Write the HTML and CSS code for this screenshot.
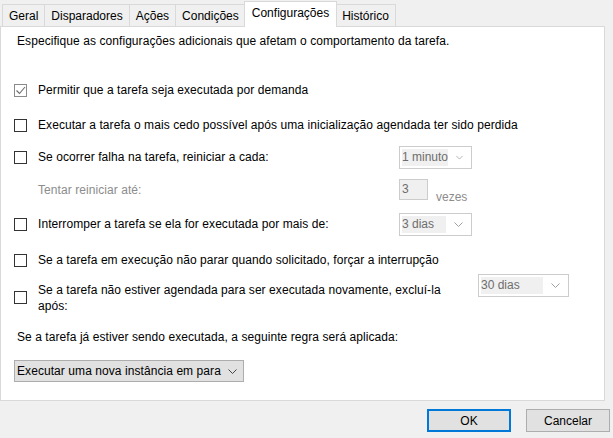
FILE: index.html
```html
<!DOCTYPE html>
<html lang="pt">
<head>
<meta charset="utf-8">
<link rel="stylesheet" href="styles.css">
</head>
<body>
<div class="tabs">
  <div class="tab">Geral</div>
  <div class="tab">Disparadores</div>
  <div class="tab">Ações</div>
  <div class="tab">Condições</div>
  <div class="tab active">Configurações</div>
  <div class="tab">Histórico</div>
</div>
<div class="panel">
  <div class="desc">Especifique as configurações adicionais que afetam o comportamento da tarefa.</div>

  <div class="row r1"><span class="cb checked"><svg width="11" height="11" viewBox="0 0 11 11"><polyline points="1.5,5.5 4.5,8.5 10,2" fill="none" stroke="#6b6b6b" stroke-width="1.1"/></svg></span><span class="lbl">Permitir que a tarefa seja executada por demanda</span></div>

  <div class="row r2"><span class="cb"></span><span class="lbl">Executar a tarefa o mais cedo possível após uma inicialização agendada ter sido perdida</span></div>

  <div class="row r3"><span class="cb"></span><span class="lbl fixed">Se ocorrer falha na tarefa, reiniciar a cada:</span>
    <div class="combo dis"><span class="val">1 minuto</span><svg class="chev" width="9" height="5" viewBox="0 0 9 5"><polyline points="0.5,0.5 4.5,4.5 8.5,0.5" fill="none" stroke="#a0a0a0" stroke-width="1"/></svg></div>
  </div>

  <div class="row r4"><span class="lbl fixed grey indent">Tentar reiniciar até:</span>
    <div class="spin">3</div><span class="grey vezes">vezes</span>
  </div>

  <div class="row r5"><span class="cb"></span><span class="lbl fixed">Interromper a tarefa se ela for executada por mais de:</span>
    <div class="combo dis"><span class="val">3 dias</span><svg class="chev" width="9" height="5" viewBox="0 0 9 5"><polyline points="0.5,0.5 4.5,4.5 8.5,0.5" fill="none" stroke="#a0a0a0" stroke-width="1"/></svg></div>
  </div>

  <div class="row r6"><span class="cb"></span><span class="lbl">Se a tarefa em execução não parar quando solicitado, forçar a interrupção</span></div>

  <div class="row r7"><span class="cb"></span><span class="lbl wrap">Se a tarefa não estiver agendada para ser executada novamente, excluí-la após:</span>
    <div class="combo dis wide"><span class="val">30 dias</span><svg class="chev" width="9" height="5" viewBox="0 0 9 5"><polyline points="0.5,0.5 4.5,4.5 8.5,0.5" fill="none" stroke="#a0a0a0" stroke-width="1"/></svg></div>
  </div>

  <div class="desc rule">Se a tarefa já estiver sendo executada, a seguinte regra será aplicada:</div>

  <div class="combo main"><span class="val">Executar uma nova instância em para</span><svg class="chev" width="9" height="5" viewBox="0 0 9 5"><polyline points="0.5,0.5 4.5,4.5 8.5,0.5" fill="none" stroke="#444" stroke-width="1"/></svg></div>
</div>
<div class="buttons">
  <button class="btn default">OK</button>
  <button class="btn">Cancelar</button>
</div>
</body>
</html>
```

FILE: styles.css
```css
html, body {
  margin: 0;
  padding: 0;
}
body {
  width: 613px;
  height: 438px;
  background: #f0f0f0;
  font-family: "Liberation Sans", Arial, sans-serif;
  font-size: 12px;
  color: #000;
  overflow: hidden;
}
.tabs {
  display: flex;
  align-items: flex-end;
  height: 26px;
  padding-left: 2px;
  position: relative;
  z-index: 1;
}
.tab {
  height: 21px;
  line-height: 22px;
  padding: 0 6px;
  border: 1px solid #d9d9d9;
  border-bottom: none;
  margin-right: -1px;
  background: #f0f0f0;
  white-space: nowrap;
}
.tab.active {
  height: 25px;
  line-height: 23px;
  background: #fff;
  padding: 0 7px;
  margin-left: -1px;
  margin-right: -2px;
  margin-bottom: -1px;
  position: relative;
  z-index: 2;
}
.panel {
  width: 603px;
  height: 373px;
  background: #fff;
  border: 1px solid #d9d9d9;
  box-sizing: content-box;
  position: relative;
}
.desc {
  margin: 7px 0 0 16px;
  line-height: 15px;
  height: 15px;
  letter-spacing: 0.07px;
}
.row {
  display: flex;
  align-items: center;
  height: 24px;
  padding-left: 13px;
}
.cb {
  width: 11px;
  height: 11px;
  border: 1px solid #333;
  background: #fff;
  flex: none;
  margin-right: 11px;
  display: flex;
}
.cb.checked {
  border-color: #8a8a8a;
}
.lbl {
  white-space: nowrap;
  line-height: 15px;
  letter-spacing: 0.07px;
}
.lbl.fixed {
  width: 361px;
  flex: none;
}
.lbl.indent {
  padding-left: 24px;
  width: 361px;
}
.grey {
  color: #8c8c8c;
}
.r1 { margin-top: 29px; }
.r2 { margin-top: 11px; }
.r3 { margin-top: 8px; }
.r4 {
  margin-top: 10px;
  height: 21px;
  align-items: flex-start;
}
.r4 .lbl { margin-top: 4px; }
.r5 { margin-top: 12px; }
.r6 { margin-top: 12px; }
.r7 {
  margin-top: 2px;
  height: 40px;
  align-items: flex-start;
}
.r7 .cb { margin-top: 17px; }
.r7 .lbl.wrap {
  white-space: normal;
  width: 420px;
  line-height: 16px;
  margin-top: 8px;
  flex: none;
}
.r7 .combo { margin-left: 20px; }
.combo {
  display: flex;
  align-items: center;
  box-sizing: border-box;
  height: 23px;
  width: 73px;
  border: 1px solid #cccccc;
  background: #fff;
  padding: 2px;
  flex: none;
}
.combo .val {
  flex: 1;
  height: 17px;
  line-height: 17px;
  white-space: nowrap;
}
.combo.dis .val {
  background: #f0f0f0;
  color: #6d6d6d;
}
.combo.dis .chev {
  margin: 0 6px 0 8px;
}
.combo.wide {
  width: 91px;
}
.spin {
  box-sizing: border-box;
  width: 29px;
  height: 21px;
  border: 1px solid #cccccc;
  background: #f0f0f0;
  color: #6d6d6d;
  line-height: 18px;
  padding-left: 2px;
  flex: none;
}
.vezes {
  margin-left: 8px;
  margin-top: 11px;
  line-height: 14px;
}
.desc.rule {
  margin-top: 16px;
}
.combo.main {
  margin: 15px 0 0 13px;
  width: 230px;
  height: 22px;
  background: #e1e1e1;
  border-color: #adadad;
  padding: 0 0 0 2px;
}
.combo.main .val {
  height: auto;
  letter-spacing: 0.07px;
}
.combo.main .chev {
  margin-right: 6px;
}
.buttons {
  display: flex;
  justify-content: flex-end;
  gap: 15px;
  padding: 8px 3px 0 0;
}
.btn {
  box-sizing: border-box;
  width: 84px;
  height: 23px;
  font-family: "Liberation Sans", Arial, sans-serif;
  font-size: 12px;
  color: #000;
  background: #e1e1e1;
  border: 1px solid #adadad;
  padding: 0;
  margin: 0;
}
.btn.default {
  border: 2px solid #0078d7;
}
```
